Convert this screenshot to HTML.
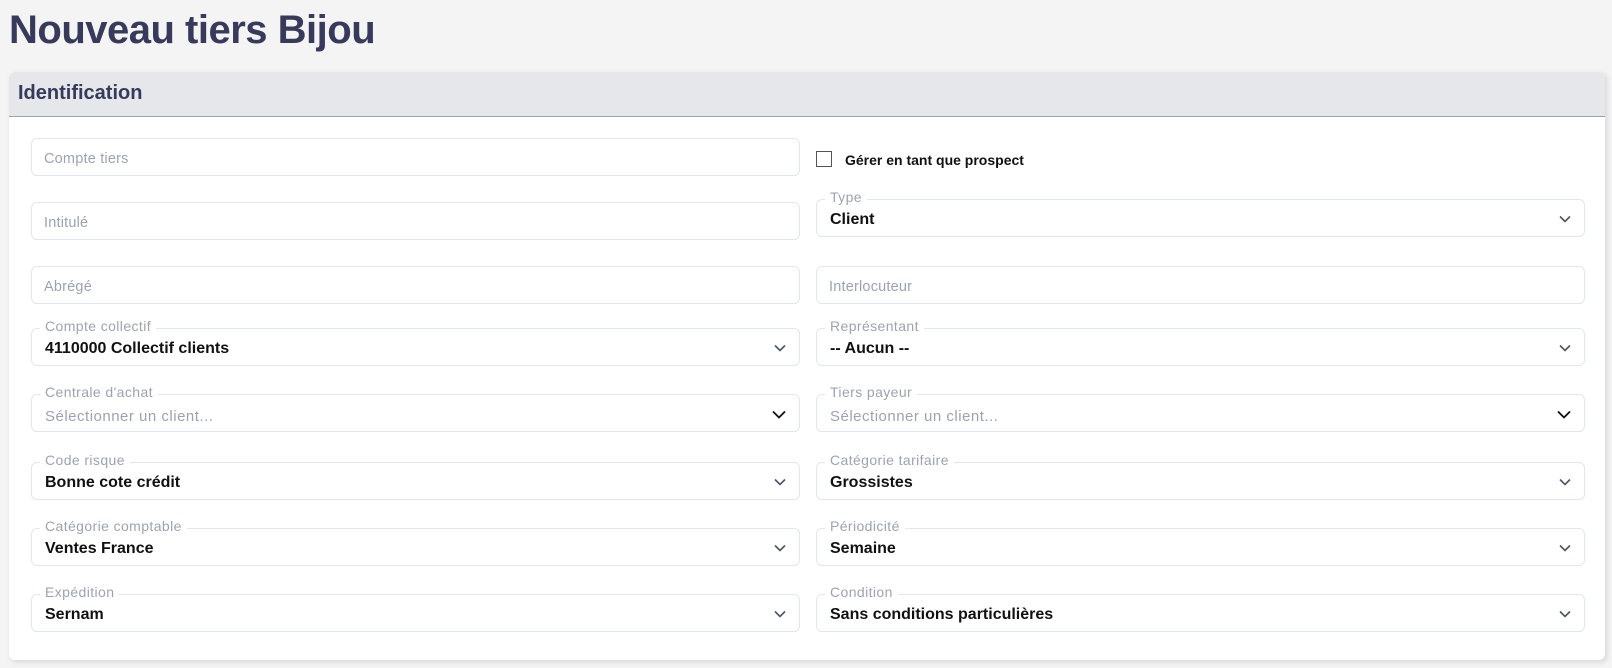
<!DOCTYPE html>
<html><head><meta charset="utf-8"><style>
body{margin:0;width:1612px;height:668px;background:#f4f4f5;font-family:"Liberation Sans",sans-serif;position:relative;overflow:hidden}
h1{position:absolute;left:9px;top:8px;margin:0;font-size:40px;font-weight:bold;color:#373a5a;letter-spacing:-0.5px}
.card{position:absolute;left:9px;top:72px;width:1596px;height:588px;background:#fff;border-radius:6px;box-shadow:2px 2px 6px rgba(0,0,0,.12)}
.hd{height:45px;background:#e5e7eb;border-bottom:1px solid #9ca3af;border-radius:6px 6px 0 0;box-sizing:border-box;padding:10px 9px;font-size:20px;font-weight:bold;color:#373a5a}
.f{position:absolute;width:769px;height:38px;border:1px solid #e2e6ee;border-radius:6px;box-sizing:border-box;background:#fff}
.ph{position:absolute;left:12px;top:12px;font-size:14.5px;color:#9ca3af;letter-spacing:0.2px}
.lb{position:absolute;left:8px;top:-11px;background:#fff;padding:0 5px;font-size:14px;color:#9ca3af;letter-spacing:0.4px}
.v{position:absolute;left:13px;top:11px;font-size:16px;color:#111;font-weight:bold}
.s{position:absolute;left:13px;top:13px;font-size:15px;color:#9ca3af;letter-spacing:0.5px}
.ch{position:absolute;right:13px;top:15px}
.L{left:31px}.R{left:816px}
</style></head><body>
<h1>Nouveau tiers Bijou</h1>
<div class="card"><div class="hd">Identification</div></div>
<div class="f L" style="top:138px"><span class="ph">Compte tiers</span></div>
<div style="position:absolute;left:816px;top:151px;width:14px;height:14px;border:1px solid #555;"></div>
<div style="position:absolute;left:845px;top:152px;font-size:14px;color:#111;font-weight:bold">Gérer en tant que prospect</div>
<div class="f L" style="top:202px"><span class="ph">Intitulé</span></div>
<div class="f R" style="top:199px"><span class="lb">Type</span><span class="v">Client</span><svg class="ch" width="12" height="8" viewBox="0 0 12 8"><path d="M1 1.5l5 5 5-5" fill="none" stroke="#4b5563" stroke-width="1.6"/></svg></div>
<div class="f L" style="top:266px"><span class="ph">Abrégé</span></div>
<div class="f R" style="top:266px"><span class="ph">Interlocuteur</span></div>

<div class="f L" style="top:328px"><span class="lb">Compte collectif</span><span class="v">4110000 Collectif clients</span><svg class="ch" width="12" height="8" viewBox="0 0 12 8"><path d="M1 1.5l5 5 5-5" fill="none" stroke="#4b5563" stroke-width="1.6"/></svg></div>
<div class="f R" style="top:328px"><span class="lb">Représentant</span><span class="v">-- Aucun --</span><svg class="ch" width="12" height="8" viewBox="0 0 12 8"><path d="M1 1.5l5 5 5-5" fill="none" stroke="#4b5563" stroke-width="1.6"/></svg></div>

<div class="f L" style="top:394px"><span class="lb">Centrale d'achat</span><span class="s">Sélectionner un client...</span><svg class="ch" width="14" height="9" viewBox="0 0 14 9"><path d="M1 1.5l6 6 6-6" fill="none" stroke="#111" stroke-width="1.8"/></svg></div>
<div class="f R" style="top:394px"><span class="lb">Tiers payeur</span><span class="s">Sélectionner un client...</span><svg class="ch" width="14" height="9" viewBox="0 0 14 9"><path d="M1 1.5l6 6 6-6" fill="none" stroke="#111" stroke-width="1.8"/></svg></div>

<div class="f L" style="top:462px"><span class="lb">Code risque</span><span class="v">Bonne cote crédit</span><svg class="ch" width="12" height="8" viewBox="0 0 12 8"><path d="M1 1.5l5 5 5-5" fill="none" stroke="#4b5563" stroke-width="1.6"/></svg></div>
<div class="f R" style="top:462px"><span class="lb">Catégorie tarifaire</span><span class="v">Grossistes</span><svg class="ch" width="12" height="8" viewBox="0 0 12 8"><path d="M1 1.5l5 5 5-5" fill="none" stroke="#4b5563" stroke-width="1.6"/></svg></div>

<div class="f L" style="top:528px"><span class="lb">Catégorie comptable</span><span class="v">Ventes France</span><svg class="ch" width="12" height="8" viewBox="0 0 12 8"><path d="M1 1.5l5 5 5-5" fill="none" stroke="#4b5563" stroke-width="1.6"/></svg></div>
<div class="f R" style="top:528px"><span class="lb">Périodicité</span><span class="v">Semaine</span><svg class="ch" width="12" height="8" viewBox="0 0 12 8"><path d="M1 1.5l5 5 5-5" fill="none" stroke="#4b5563" stroke-width="1.6"/></svg></div>

<div class="f L" style="top:594px"><span class="lb">Expédition</span><span class="v">Sernam</span><svg class="ch" width="12" height="8" viewBox="0 0 12 8"><path d="M1 1.5l5 5 5-5" fill="none" stroke="#4b5563" stroke-width="1.6"/></svg></div>
<div class="f R" style="top:594px"><span class="lb">Condition</span><span class="v">Sans conditions particulières</span><svg class="ch" width="12" height="8" viewBox="0 0 12 8"><path d="M1 1.5l5 5 5-5" fill="none" stroke="#4b5563" stroke-width="1.6"/></svg></div>
</body></html>
